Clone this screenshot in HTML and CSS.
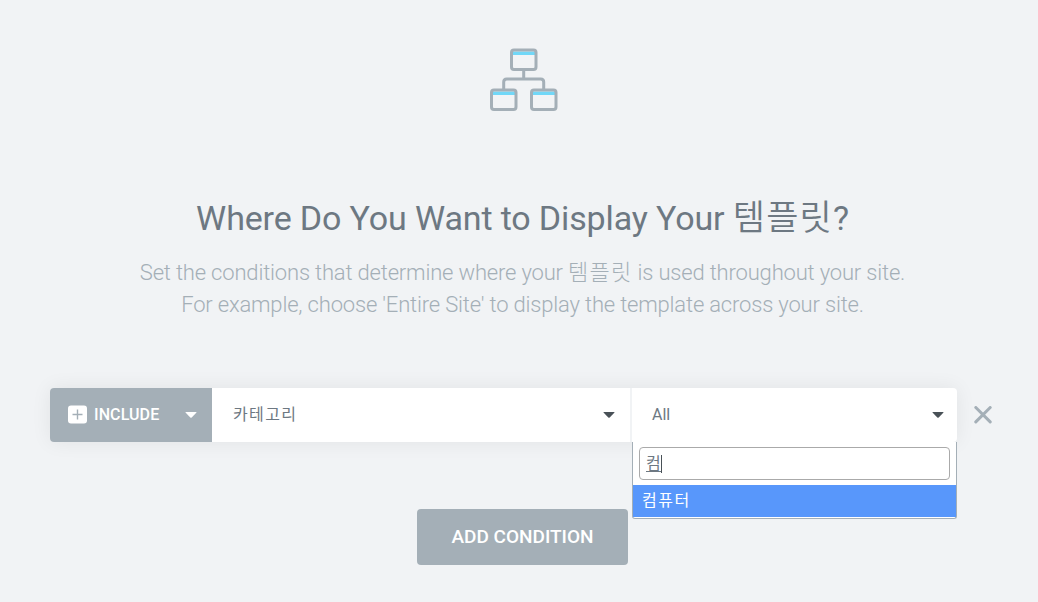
FILE: index.html
```html
<!DOCTYPE html>
<html lang="ko">
<head>
    <meta charset="UTF-8">
    <meta name="viewport" content="width=device-width, initial-scale=1.0">
    <title>Display Conditions</title>
    <link rel="stylesheet" href="styles.css">
</head>
<body>
    <main class="conditions">
        <svg class="conditions-icon" width="70" height="64" viewBox="0 0 70 64" fill="none">
            <path class="icon-bar" d="M23 4.500h24v3.500H23zM3 44.500h24v3.500H3zM43 44.500h24v3.500H43z"/>
            <g class="icon-line">
                <rect x="22.500" y="3" width="24.500" height="19.500" rx="2.500"/>
                <rect x="2.500" y="43" width="24.500" height="19.500" rx="2.500"/>
                <rect x="42.500" y="43" width="24.500" height="19.500" rx="2.500"/>
                <path d="M34.700 23v9M14.700 43v-8q0-3 3-3h34q3 0 3 3v8"/>
            </g>
        </svg>
        <h1 class="title">Where Do You Want to Display Your <span class="title-ko">템플릿</span>?</h1>
        <p class="description">
            <span class="line">Set the conditions that determine where your <span class="desc-ko">템플릿</span> is used throughout your site.</span>
            <span class="line">For example, choose 'Entire Site' to display the template across your site.</span>
        </p>

        <div class="condition-row">
            <div class="condition">
                <div class="condition-type">
                    <svg class="plus" width="19" height="19" viewBox="0 0 19 19">
                        <rect y=".5" width="19" height="18" rx="3" fill="#fff"/>
                        <path d="M9.500 4.500v10M4.500 9.500h10" stroke="#a4afb7" stroke-width="1.400"/>
                    </svg>
                    <span class="type-label">INCLUDE</span>
                    <svg class="caret" width="12" height="6" viewBox="0 0 12 6"><path d="M1 0h10q1 0 .3.800L6.700 5.500q-.7.600-1.400 0L.7.800Q0 0 1 0z"/></svg>
                </div>
                <div class="condition-name">
                    <span class="name-label">카테고리</span>
                    <svg class="caret" width="12" height="6" viewBox="0 0 12 6"><path d="M1 0h10q1 0 .3.800L6.700 5.500q-.7.600-1.400 0L.7.800Q0 0 1 0z"/></svg>
                </div>
                <div class="condition-sub">
                    <span class="sub-label">All</span>
                    <svg class="caret" width="12" height="6" viewBox="0 0 12 6"><path d="M1 0h10q1 0 .3.800L6.700 5.500q-.7.600-1.400 0L.7.800Q0 0 1 0z"/></svg>
                    <div class="dropdown">
                        <div class="search"><span class="search-text">컴</span><span class="cursor"></span></div>
                        <div class="option">컴퓨터</div>
                    </div>
                </div>
            </div>
            <svg class="remove" width="18" height="18" viewBox="0 0 18 18"><path d="M1.800 1.500l14.400 14.400M16.200 1.500L1.800 15.900"/></svg>
        </div>

        <button class="add-button" type="button">ADD CONDITION</button>
    </main>
</body>
</html>
```
FILE: styles.css
```css
* { box-sizing: border-box; }
body { margin: 0; background-color: #f1f3f5; font-family: Roboto, "Noto Sans CJK KR", sans-serif; color: #6d7882; }

.conditions { display: flex; flex-direction: column; align-items: center; height: 602px; padding: 47px 43px 0 50px; }
.conditions-icon { margin-left: 2px; }
.icon-bar { fill: #71d7f7; }
.icon-line { stroke: #a4afb7; stroke-width: 3; }

.title { height: 40px; margin: 87px 0 0; font-size: 34px; font-weight: 400; letter-spacing: -0.14px; line-height: 40px; white-space: nowrap; }
.title-ko { font-size: 35px; font-weight: 350; letter-spacing: 1.2px; line-height: 1; }
.description { margin: 19px 0 0; color: #a4afb7; font-size: 22px; font-weight: 300; letter-spacing: -0.18px; line-height: 32px; text-align: center; white-space: nowrap; }
.desc-ko { letter-spacing: 1.2px; }
.line { display: block; height: 32px; }

.condition-row { display: flex; align-items: center; width: 100%; height: 54px; margin-top: 67px; }
.condition { display: flex; width: 907px; height: 54px; border-radius: 4px; background-color: #fff; box-shadow: 0 0 20px rgba(0, 0, 0, 0.07); }
.condition-type, .condition-name, .condition-sub { display: flex; align-items: center; padding-bottom: 1px; font-size: 16px; }
.condition-type { width: 162px; padding-right: 15px; padding-left: 18px; border-radius: 4px 0 0 4px; background-color: #a4afb7; color: #fff; }
.type-label { margin-left: 7px; padding-bottom: 1px; font-weight: 500; letter-spacing: 0.1px; }
.condition-name { width: 420px; padding-right: 15px; padding-left: 21px; border-right: 2px solid #f1f3f5; }
.name-label { padding-bottom: 3px; letter-spacing: 1.4px; }
.condition-sub { position: relative; flex: 1; padding-right: 13px; padding-left: 20px; }
.sub-label { padding-bottom: 1px; }
.caret { margin-left: auto; fill: #495157; }
.condition-type .caret { fill: #fff; }
.remove { margin-left: 17px; fill: none; stroke: #a4afb7; stroke-width: 3; stroke-linecap: round; }

.dropdown { position: absolute; top: 54px; left: 0; width: 325px; height: 77px; padding-top: 5px; border: 1px solid #a4afb7; border-top: 0; border-radius: 0 0 3px 3px; background-color: #fff; }
.search { display: flex; align-items: center; height: 33px; margin: 0 6px; padding-left: 6px; border: 1px solid #aaa; border-radius: 4px; }
.search-text { height: 17px; border-bottom: 1px solid #6d7882; font-size: 16px; line-height: 18px; }
.cursor { width: 1px; height: 18px; background-color: #495157; }
.option { height: 32px; margin-top: 5px; padding-left: 9px; background-color: #5897fb; color: #fff; font-size: 16px; letter-spacing: 1.5px; line-height: 32px; }

.add-button { width: 211px; height: 56px; margin-top: 67px; padding: 0 0 2px; border: 0; border-radius: 4px; background-color: #a4afb7; color: #fff; font-family: inherit; font-size: 19px; font-weight: 500; }
```
